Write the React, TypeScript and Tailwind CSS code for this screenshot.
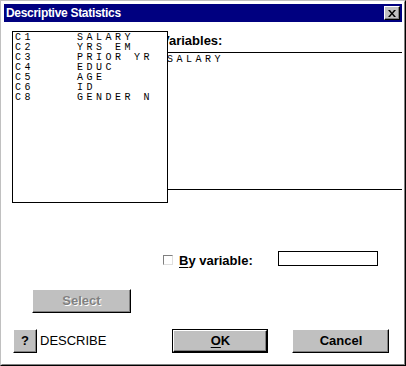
const vars = [
  ["C1", "SALARY"],
  ["C2", "YRS EM"],
  ["C3", "PRIOR YR"],
  ["C4", "EDUC"],
  ["C5", "AGE"],
  ["C6", "ID"],
  ["C8", "GENDER N"],
];

const sans = "font-['Liberation_Sans',Arial,sans-serif]";
const mono = "font-['Liberation_Mono','Courier_New',monospace]";
const bevel =
  "bg-[#c0c0c0] border border-t-white border-l-white border-r-black border-b-black shadow-[inset_-1px_-1px_0_#808080]";

export default function App() {
  return (
    <div className={`w-[406px] h-[366px] border border-t-[#c0c0c0] border-l-[#c0c0c0] border-r-black border-b-black ${sans}`}>
      <div className="h-full border border-t-white border-l-white border-r-[#808080] border-b-[#808080] bg-white p-[2px] flex flex-col">
        {/* title bar */}
        <div className="h-[18px] bg-[#000080] flex items-center justify-between pl-[2px] pr-[2px]">
          <span className="text-white font-bold text-[12px] tracking-[-0.3px] leading-none">
            Descriptive Statistics
          </span>
          <div className={`w-[16px] h-[14px] ${bevel} flex items-center justify-center`}>
            <svg width="8" height="7" viewBox="0 0 8 7">
              <path d="M0 0h2l2 2.5L6 0h2L5 3.5 8 7H6L4 4.5 2 7H0l3-3.5z" fill="black" />
            </svg>
          </div>
        </div>

        {/* body */}
        <div className="flex-1 flex flex-col">
          <div className="flex pt-[9px] pl-[8px]">
            <div className="relative z-10 w-[156px] h-[172px] border border-black bg-white pt-[1px] pl-[2px]">
              {vars.map(([c, name]) => (
                <div key={c} className={`flex h-[10px] leading-[10px] text-[10px] tracking-[3.5px] text-black ${mono}`}>
                  <span className="w-[62px]">{c}</span>
                  <span className="whitespace-pre">{name}</span>
                </div>
              ))}
            </div>
            <div className="flex-1 flex flex-col ml-[-1px]">
              <div className="h-[21px] pt-[2px] -ml-[6px] text-[13px] leading-[15px] font-bold text-black">
                Variables:
              </div>
              <div className="h-[138px] border-t border-b border-black pt-[2px]">
                <div className={`text-[10px] leading-[10px] tracking-[3.5px] text-black ${mono}`}>SALARY</div>
              </div>
            </div>
          </div>

          {/* by variable row */}
          <div className="flex items-center mt-[48px] h-[15px] pl-[159px]">
            <div className="w-[10px] h-[10px] border border-t-[#808080] border-l-[#808080] border-r-[#dfdfdf] border-b-[#dfdfdf] bg-white mt-[3px]" />
            <span className="ml-[6px] mt-[3px] text-[13px] font-bold text-black leading-[15px]">
              <span className="underline underline-offset-2">B</span>y variable:
            </span>
            <div className="ml-[25px] w-[100px] h-[15px] border border-black bg-white" />
          </div>

          {/* select */}
          <div className="mt-[23px] pl-[28px]">
            <div className={`w-[99px] h-[24px] ${bevel} flex items-center justify-center`}>
              <span className="text-[13px] font-bold text-[#808080] [text-shadow:1px_1px_0_#ffffff]">Select</span>
            </div>
          </div>

          {/* bottom buttons */}
          <div className="mt-[16px] flex items-center pl-[9px]">
            <div className={`w-[24px] h-[24px] ${bevel} flex items-center justify-center`}>
              <span className="text-[13px] font-bold text-black">?</span>
            </div>
            <span className="ml-[3px] text-[13px] text-black">DESCRIBE</span>
            <div className="ml-[66px] w-[96px] h-[24px] border border-black">
              <div className={`w-full h-full ${bevel} flex items-center justify-center`}>
                <span className="text-[13px] font-bold text-black">
                  <span className="underline underline-offset-2">O</span>K
                </span>
              </div>
            </div>
            <div className={`ml-[24px] w-[97px] h-[24px] ${bevel} flex items-center justify-center`}>
              <span className="text-[13px] font-bold text-black">Cancel</span>
            </div>
          </div>
        </div>
      </div>
    </div>
  );
}
